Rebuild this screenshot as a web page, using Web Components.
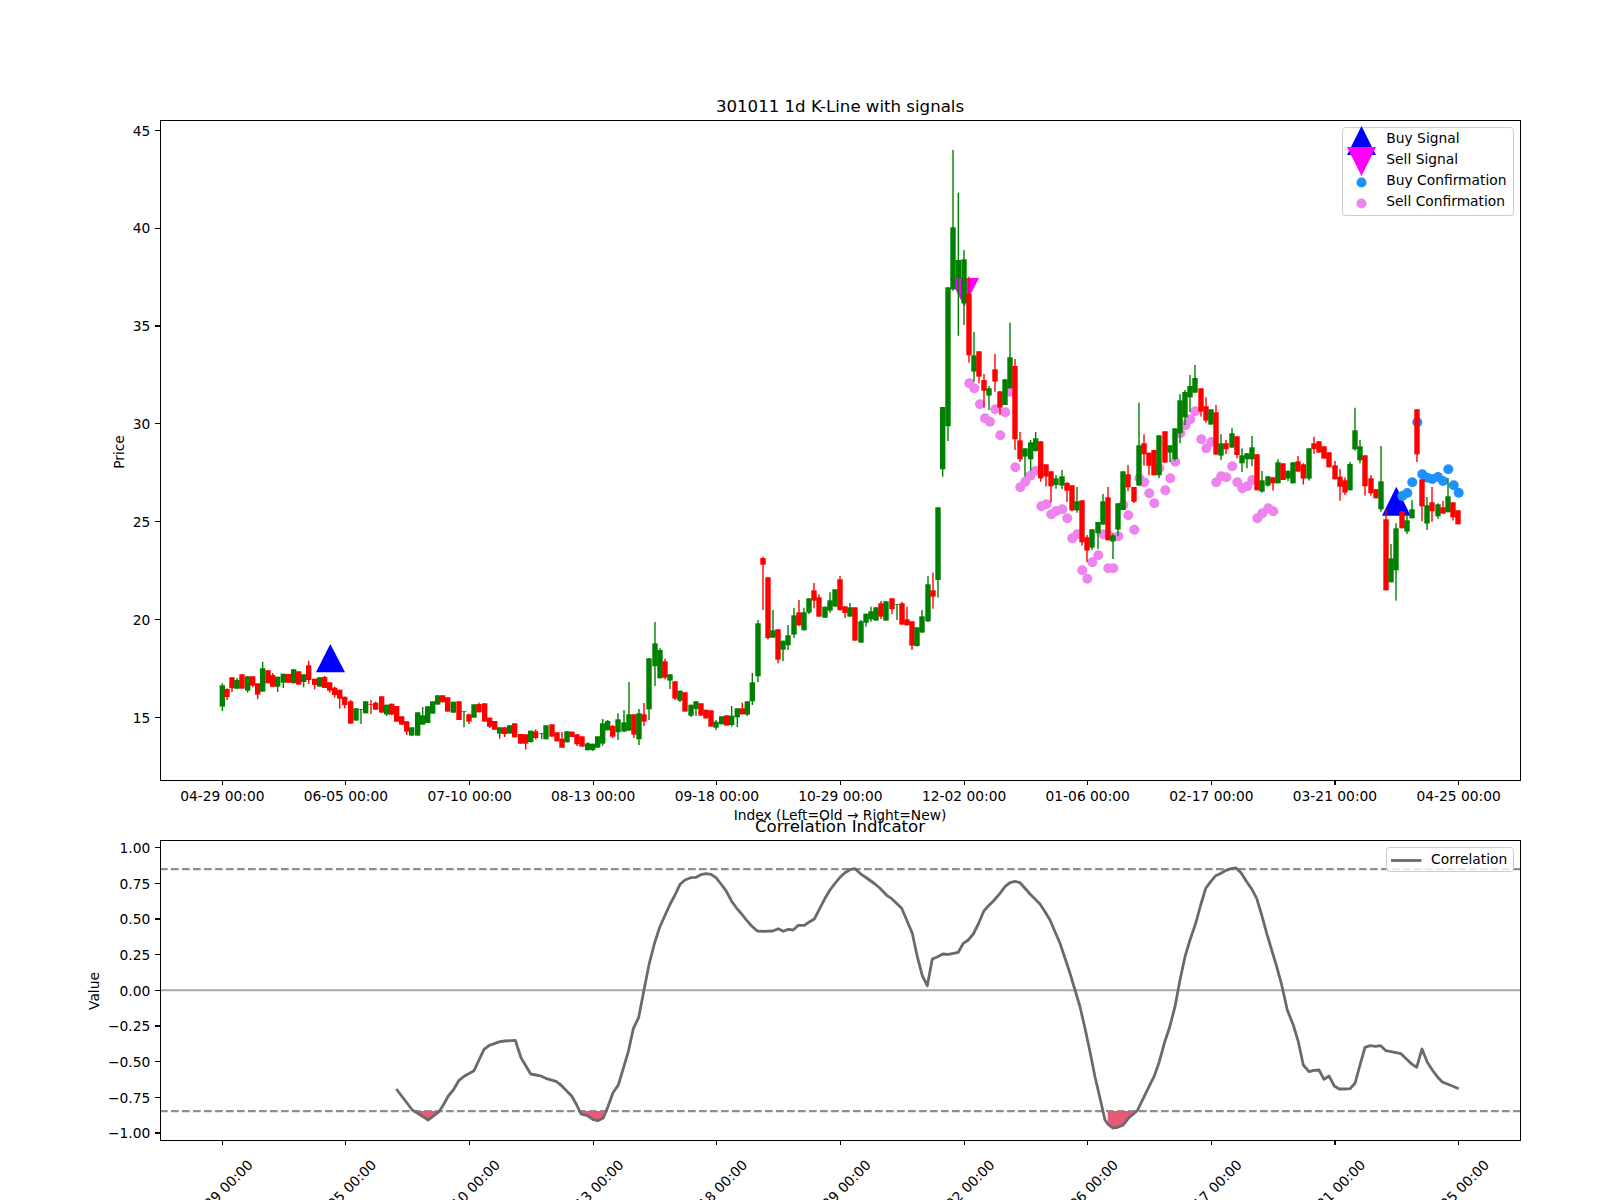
<!DOCTYPE html>
<html lang="en">
<head>
<meta charset="utf-8">
<title>301011 1d K-Line with signals</title>
<style>
html,body{margin:0;padding:0;background:#fff;overflow:hidden;font-family:"DejaVu Sans",sans-serif}
</style>
</head>
<body>
<mpl-figure>
  <kline-panel>
    <chart-legend style="top:7.3px;right:6.2px;width:171.5px;height:88.4px">
      <legend-item kind="buy">Buy Signal</legend-item>
      <legend-item kind="sell">Sell Signal</legend-item>
      <legend-item kind="buydot">Buy Confirmation</legend-item>
      <legend-item kind="selldot">Sell Confirmation</legend-item>
    </chart-legend>
  </kline-panel>
  <corr-panel>
    <chart-legend style="top:6.3px;right:6.2px;width:127.7px;height:24.7px">
      <legend-item kind="line">Correlation</legend-item>
    </chart-legend>
  </corr-panel>
</mpl-figure>
<script>
const FONT='"DejaVu Sans","Liberation Sans",sans-serif';
const TICK_X=k=>222.3+123.63*k;
const DATES=['04-29','06-05','07-10','08-13','09-18','10-29','12-02','01-06','02-17','03-21','04-25'];

/* candles, read in 3x crop coordinates: colour x bodyTop bodyBottom wickTop wickBottom */
const CANDLE_SETS=[
{ox:140,oy:600,d:`G 247 256 320 250 333;R 261 267 291 265 300;R 276 232 265 232 276;G 291 240 266 234 266;R 306 223 266 223 266;G 323 229 272 229 278;R 338 229 257 229 262;R 353 250 284 250 298;G 368 205 275 185 275;R 384 211 250 211 250;R 398 225 260 219 260;G 413 230 260 230 276;G 430 221 248 221 264;R 445 222 248 222 248;G 461 208 250 208 250;R 476 214 254 214 254;G 491 223 246 223 262;R 506 196 240 182 252;R 524 236 255 236 268;G 539 232 260 232 260;R 554 231 264 228 264;R 569 247 272 247 278;R 584 263 285 260 292;R 599 269 296 269 326;R 614 290 315 290 325;R 632 304 371 300 371;G 648 325 362 325 362;G 663 327 329 327 372;G 677 304 340 304 340;R 693 312 314 300 342;R 707 308 329 305 329;R 725 289 338 289 338;G 740 314 343 314 348;R 755 311 344 311 344;R 770 318 365 318 365;R 785 349 374 349 376;R 800 364 395 364 405;G 815 382 407 382 407;G 833 337 407 337 407;G 848 346 374 321 374;G 863 319 369 319 369;G 878 304 341 304 341;G 893 286 314 286 314;R 908 286 307 286 307;R 923 292 335 292 335;G 940 305 338 305 338;R 957 304 360 304 360;G 972 334 336 334 382;R 987 343 365 341 372;G 1002 313 353 313 353;R 1017 312 337 308 337;R 1034 310 365 310 365;R 1049 353 380 353 384;R 1064 363 389 363 389;G 1079 382 401 382 416;R 1094 382 402 382 411;G 1109 376 401 376 401;R 1124 370 412 370 412;R 1142 402 431 402 431;R 1157 403 431 403 449;G 1172 392 426 392 428;R 1187 394 414 388 418`},
{ox:540,oy:500,d:`G 5 699 701 699 717;G 18 676 718 676 718;R 36 673 710 673 710;R 51 697 724 697 724;R 66 716 743 696 743;G 81 694 727 694 727;R 96 695 711 695 711;R 111 703 733 703 738;R 126 709 740 709 740;G 143 730 751 727 751;G 158 731 750 731 753;G 173 709 743 709 743;G 188 670 731 657 737;G 203 663 691 660 691;R 218 678 710 675 714;G 234 658 697 640 720;G 252 667 695 630 695;G 267 643 692 546 692;R 282 643 704 643 714;G 297 640 718 627 735;R 312 643 665 609 678;G 327 475 628 475 660;G 345 430 499 366 558;G 360 450 535 445 535;R 375 484 533 476 538;G 390 523 542 523 567;R 405 544 596 544 600;G 420 572 602 572 606;R 435 577 635 577 635;G 453 614 647 614 651;G 468 604 627 604 648;R 483 610 647 610 647;R 498 629 655 629 655;R 513 631 680 631 680;G 528 665 683 660 690;G 545 649 673 649 673;R 560 646 677 646 677;G 575 647 675 618 680;G 592 625 652 625 681;R 607 625 643 608 643;G 622 604 644 604 648;G 637 547 604 519 615;G 654 370 529 360 546;R 669 174 194 170 330;R 684 232 414 232 418;G 699 391 413 330 413;R 714 388 479 388 490;G 729 422 449 422 483;G 744 406 436 375 450;G 762 346 404 324 414;R 777 337 376 300 378;G 792 337 391 323 391;G 807 295 338 295 342;R 822 271 302 249 325;R 837 292 350 283 350;G 855 320 353 320 353;G 870 301 332 277 338;G 885 268 320 268 320;R 900 238 330 228 332;R 915 319 339 319 354;G 930 322 350 309 350;R 945 322 422 322 422;G 963 364 428 360 428;G 978 341 368 341 380;G 993 334 358 320 365;G 1008 322 362 322 362;R 1023 310 350 303 357;G 1038 304 362 304 362;R 1056 295 328 295 342;G 1071 312 314 312 360;R 1086 310 374 306 374;R 1101 358 376 320 376;R 1116 364 437 364 450;G 1131 382 438 382 440;G 1146 349 398 330 398;G 1164 253 364 228 366;R 1179 271 290 218 326;G 1194 22 240 22 293`},
{ox:900,oy:130,d:`G 128 831 1018 831 1040;G 144 472 889 472 933;G 159 292 478 60 482;G 175 390 445 188 617;G 192 388 520 360 585;R 207 492 676 440 698;G 222 676 725 606 755;R 237 664 740 664 760;R 252 750 782 732 833;G 267 775 797 768 840;R 285 718 755 672 785;R 300 784 833 784 855;G 315 748 825 748 825;G 330 682 775 578 775`},
{ox:980,oy:380,d:`R 105 -42 178 -63 210;R 120 181 238 156 246;G 135 205 230 205 290;G 152 187 238 180 272;G 167 175 213 156 215;R 182 184 295 184 305;R 198 253 290 253 320;R 213 274 319 274 368;G 228 295 315 285 326;G 246 289 317 270 327;R 261 309 332 306 366;R 276 316 391 316 393;G 291 364 391 321 398;R 306 361 487 361 497;R 321 472 512 465 546;G 336 448 503 448 510;G 354 426 460 426 508;G 369 364 434 342 434;R 384 352 481 321 481;G 399 466 485 460 537;G 414 370 449 370 468;G 429 274 390 274 390;R 444 283 322 255 333;R 462 321 365 321 369;G 477 196 317 68 317;R 492 190 223 163 257;R 507 218 257 218 285;R 522 210 286 210 286;G 537 166 286 166 294;R 555 154 248 154 248;G 570 196 218 196 246;G 585 145 237 145 242;G 600 61 160 42 190;G 615 36 112 30 135;G 630 18 52 -15 96;G 645 -6 38 -45 38;R 663 25 95 25 110;R 678 79 122 52 128;G 693 88 134 88 134;R 708 97 224 75 224;G 723 190 227 163 240;R 738 190 208 180 222;G 756 160 203 144 203;R 771 169 225 169 235;G 786 226 250 205 276;G 801 220 238 220 265;G 816 202 238 168 258;R 831 223 331 223 331;G 846 301 335 273 338;G 864 289 317 289 320;R 879 292 310 292 332;G 894 247 310 238 310`},
{ox:1260,oy:380,d:`R 69 250 300 250 300;G 84 272 296 272 303;G 99 247 310 247 310;R 114 244 275 228 275;R 130 253 296 250 314;G 147 205 296 205 302;R 162 190 207 170 222;R 177 184 218 184 218;R 192 199 236 199 236;R 207 217 262 217 262;R 225 256 298 243 298;R 240 290 320 267 362;R 255 301 338 292 345;G 270 252 331 246 331;G 285 151 208 83 212;G 300 199 241 180 250;R 315 226 319 226 347;R 333 295 340 285 347;R 348 328 355 328 355;G 363 304 388 198 395;R 378 418 631 390 631;G 393 535 607 492 607;G 408 445 571 430 662;R 426 394 445 394 445;G 441 421 455 403 462;G 456 388 415 360 415;R 471 88 223 88 246;R 486 298 379 298 424;G 501 376 431 351 450;R 516 367 394 321 425;G 534 373 409 370 417;R 549 382 401 363 401;G 564 349 397 294 397;R 579 367 412 367 422;R 594 391 433 391 433`}
];
const PINK=[[969.3,383.3],[974.3,388.3],[1010,391.7]].concat(
`0 73;15 115;30 125;46 88;76 97;61 166;106 262;121 322;136 305;151 287;166 273;184 379;199 373;214 403;229 393;247 388;262 415;277 475;292 463;307 571;322 596;337 547;355 526;370 463;385 466;385 565;400 565;415 469;430 375;445 406;463 449;478 295;493 307;508 340;523 370;538 265;556 331;571 295;586 245;601 160;616 136;631 118;646 94;664 178;679 205;694 186;709 307;724 289;739 292;757 259;772 307;787 325;802 319;817 300;832 415;847 400;865 385;880 394`
.split(';').map(s=>{const [x,y]=s.split(' ').map(Number);return [980+x/3,380+y/3]}));
const BLUE=`427 348;442 339;457 307;472 127;487 283;502 293;517 297;534 291;549 303;565 268;581 316;596 338`
.split(';').map(s=>{const [x,y]=s.split(' ').map(Number);return [1260+x/3,380+y/3]});

const pts=(s,ox,oy)=>s.split(' ').map(p=>{const [x,y]=p.split(',').map(Number);return [(ox+x/3).toFixed(1),(oy+y/3).toFixed(1)].join(',')}).join(' ');
const CORR=[
 pts('1009,897 1057,960 1073,970 1105,990 1137,965 1150,945 1165,918 1180,900 1197,871 1215,857 1242,842 1257,810 1272,778 1288,766 1320,755 1335,753 1366,751 1383,803 1412,852 1428,855 1443,858 1460,866 1490,875 1505,888',60,790),
 pts('0,882 15,898 35,918 50,945 63,972 82,977 98,988 113,992 130,984 143,952 159,908 175,885 190,835 205,785 220,716 236,682 252,600 268,520 283,462 298,415 314,378 329,345 345,315 360,283 375,270 392,263 408,262 423,254 438,251 453,253 468,263 483,282 498,302 514,332 530,355 545,372 560,391 575,408 592,423 608,424 638,423 655,416 670,424 685,418 700,420 715,406 733,406 748,396 763,387 778,358 795,325 810,300 825,280 840,262 855,248 870,239 885,236 905,254 920,264 945,282 960,295 980,316 995,326 1025,355 1040,390 1057,430 1072,500 1087,557 1102,587 1117,507 1133,500 1148,492 1165,493 1195,487 1210,460 1225,450 1240,432 1255,402 1272,362 1288,345 1303,330 1320,310 1335,290 1350,278 1365,274 1380,278 1395,295 1410,312 1440,342 1455,365 1470,390',560,790),
 pts('15,425 30,460 45,505 60,550 75,600 90,650 105,715 120,785 135,860 150,925 165,990 173,1002 188,1014 203,1012 220,1005 235,985 262,962 280,925 297,890 312,860 328,815 343,760 358,715 375,650 390,570 405,500 420,450 437,400 452,345 467,295 482,275 497,257 513,250 528,241 543,236 558,234 573,248 590,275 605,297 620,325 635,375 650,430 665,480 680,530 695,585 712,660 730,705 745,755 760,825 777,845 792,841 807,840 822,868 837,858 853,888 868,897 883,897 900,896 915,880 930,825 945,772 960,767 977,769 992,767 1008,782 1023,785 1038,788 1053,791 1070,808 1085,822 1100,832 1116,777 1132,817 1147,840 1162,860 1177,876 1192,882 1207,888 1226,896',1050,790)
].join(' ');
const FILLS=[
 pts('1073,963 1132,963 1105,990 1073,970',60,790),
 pts('63,963 132,963 130,984 113,992 98,988 82,977 63,972',560,790),
 pts('173,963 253,963 235,985 220,1005 203,1012 188,1014 173,1002',1050,790)
];

function frame(x0,y0,x1,y1){
  return `<rect x="${x0}" y="${y0}" width="${x1-x0}" height="${y1-y0}" fill="none" stroke="#000" stroke-width="1.1" shape-rendering="crispEdges"/>`;
}
function xTicks(yBase){
  let s='';
  for(let k=0;k<11;k++){const x=TICK_X(k);s+=`<line x1="${x}" x2="${x}" y1="${yBase}" y2="${yBase+4.9}" stroke="#000" stroke-width="1.1" shape-rendering="crispEdges"/>`}
  return s;
}
function yTick(y,label){
  return `<line x1="155.1" x2="160.5" y1="${y}" y2="${y}" stroke="#000" stroke-width="1.1" shape-rendering="crispEdges"/><text x="150.3" y="${y+5.2}" text-anchor="end">${label}</text>`;
}

class MplFigure extends HTMLElement{
  constructor(){super();this.attachShadow({mode:'open'}).innerHTML=`<style>
  :host{display:block;box-sizing:border-box;width:1600px;height:1200px;padding:120px 80px 0 160px;background:#fff;overflow:hidden;font-family:${FONT};color:#000}
  ::slotted(corr-panel){margin-top:61px}
  </style><slot></slot>`}
}
class KlinePanel extends HTMLElement{
  constructor(){super();
    let marks='';
    marks+=`<polygon points="316,672.3 330.3,644 345,672.3" fill="#00f"/><polygon points="1382,515.7 1396.3,486.7 1410.7,515.7" fill="#00f"/><polygon points="949.7,278 979,278 964.3,306.7" fill="#f0f"/>`;
    PINK.forEach(p=>marks+=`<circle cx="${p[0].toFixed(1)}" cy="${p[1].toFixed(1)}" r="5" fill="#ee82ee"/>`);
    BLUE.forEach(p=>marks+=`<circle cx="${p[0].toFixed(1)}" cy="${p[1].toFixed(1)}" r="5" fill="#1e90ff"/>`);
    let cs='';
    CANDLE_SETS.forEach(set=>set.d.split(';').forEach(r=>{
      const a=r.trim().split(' ');const col=a[0]==='G'?'#008000':'#f00';
      const [x,t,b,wt,wb]=a.slice(1).map(Number);
      const X=set.ox+x/3,T=set.oy+t/3,B=set.oy+b/3,WT=set.oy+wt/3,WB=set.oy+wb/3;
      cs+=`<rect x="${(X-.7).toFixed(2)}" y="${WT.toFixed(1)}" width="1.4" height="${(WB-WT).toFixed(1)}" fill="${col}"/>`;
      cs+=`<rect x="${(X-2.7).toFixed(2)}" y="${T.toFixed(1)}" width="5.4" height="${(B-T).toFixed(1)}" fill="${col}"/>`;
    }));
    let y='';[45,40,35,30,25,20,15].forEach(v=>y+=yTick(+(130.3+(45-v)*19.573).toFixed(1),v));
    let xl='';DATES.forEach((d,k)=>xl+=`<text x="${TICK_X(k)}" y="801" text-anchor="middle">${d} 00:00</text>`);
    this.attachShadow({mode:'open'}).innerHTML=`<style>
    :host{display:block;position:relative;width:1360px;height:660px}
    svg{display:block;overflow:visible;font:13.82px ${FONT}}
    </style>
    <svg width="1360" height="660" viewBox="160 120 1360 660">
      ${marks}${cs}${frame(160.5,120.5,1520.5,780.5)}${y}${xTicks(780.5)}${xl}
      <text x="840" y="112" text-anchor="middle" font-size="16.6">301011 1d K-Line with signals</text>
      <text x="840" y="820" text-anchor="middle">Index (Left=Old → Right=New)</text>
      <text transform="translate(124 452) rotate(-90)" text-anchor="middle">Price</text>
    </svg><slot></slot>`;
  }
}
class CorrPanel extends HTMLElement{
  constructor(){super();
    let y='';[1,.75,.5,.25,0,-.25,-.5,-.75,-1].forEach(v=>y+=yTick(+(990.3-v*142.67).toFixed(1),(v<0?'\u2212':'')+Math.abs(v).toFixed(2)));
    let xl='';DATES.forEach((d,k)=>{const x=TICK_X(k)-2;xl+=`<text transform="translate(${x} 1192) rotate(-45)" y="5" text-anchor="middle">${d} 00:00</text>`});
    this.attachShadow({mode:'open'}).innerHTML=`<style>
    :host{display:block;position:relative;width:1360px;height:299px}
    svg{display:block;overflow:visible;font:13.82px ${FONT}}
    </style>
    <svg width="1360" height="299" viewBox="160 841 1360 299">
      <line x1="160" x2="1520" y1="869.1" y2="869.1" stroke="#8e8e8e" stroke-width="2.1" stroke-dasharray="7.7 3.3"/>
      <line x1="160" x2="1520" y1="1111.1" y2="1111.1" stroke="#8e8e8e" stroke-width="2.1" stroke-dasharray="7.7 3.3"/>
      <line x1="160" x2="1520" y1="990.3" y2="990.3" stroke="#a8a8a8" stroke-width="2.1"/>
      ${FILLS.map(p=>`<polygon points="${p}" fill="#e65a76"/>`).join('')}
      <polyline points="${CORR}" fill="none" stroke="#6a6a6a" stroke-width="2.8" stroke-linejoin="round"/>
      ${frame(160.5,840.5,1520.5,1140.5)}${y}${xTicks(1140.5)}${xl}
      <text x="840" y="832" text-anchor="middle" font-size="16.6">Correlation Indicator</text>
      <text transform="translate(98.5 991) rotate(-90)" text-anchor="middle">Value</text>
    </svg><slot></slot>`;
  }
}
class ChartLegend extends HTMLElement{
  constructor(){super();this.attachShadow({mode:'open'}).innerHTML=`<style>
    :host{display:flex;flex-direction:column;position:absolute;box-sizing:border-box;padding:1.5px 0 0 4px;background:rgba(255,255,255,.8);border:1.1px solid #ccc;border-radius:3.5px;font:13.82px ${FONT};color:#000}
  </style><slot></slot>`}
}
const LEGEND_MARKS={
  buy:`<polygon points="0,29 14.5,0 29,29" fill="#00f"/>`,
  sell:`<polygon points="0,0 29,0 14.5,29" fill="#f0f"/>`,
  buydot:`<circle cx="14.5" cy="14.5" r="5" fill="#1e90ff"/>`,
  selldot:`<circle cx="14.5" cy="14.5" r="5" fill="#ee82ee"/>`,
  line:`<line x1="0" x2="30.4" y1="14.5" y2="14.5" stroke="#6a6a6a" stroke-width="2.8"/>`
};
class LegendItem extends HTMLElement{
  connectedCallback(){
    const kind=this.getAttribute('kind');
    const isLine=kind==='line';
    this.attachShadow({mode:'open'}).innerHTML=`<style>
    :host{display:flex;height:21px;align-items:flex-start;gap:${isLine?'9.6px':'10px'}}
    .m{flex:none;width:${isLine?30.4:29}px;height:21px;display:flex;align-items:center}
    svg{display:block;overflow:visible;flex:none}
    .t{line-height:17px;white-space:nowrap;padding-top:${isLine?1:0}px}
    </style><div class="m"><svg width="${isLine?30.4:29}" height="29" viewBox="0 0 ${isLine?30.4:29} 29">${LEGEND_MARKS[kind]}</svg></div><div class="t"><slot></slot></div>`;
  }
}
customElements.define('mpl-figure',MplFigure);
customElements.define('kline-panel',KlinePanel);
customElements.define('corr-panel',CorrPanel);
customElements.define('chart-legend',ChartLegend);
customElements.define('legend-item',LegendItem);
</script>
</body>
</html>
